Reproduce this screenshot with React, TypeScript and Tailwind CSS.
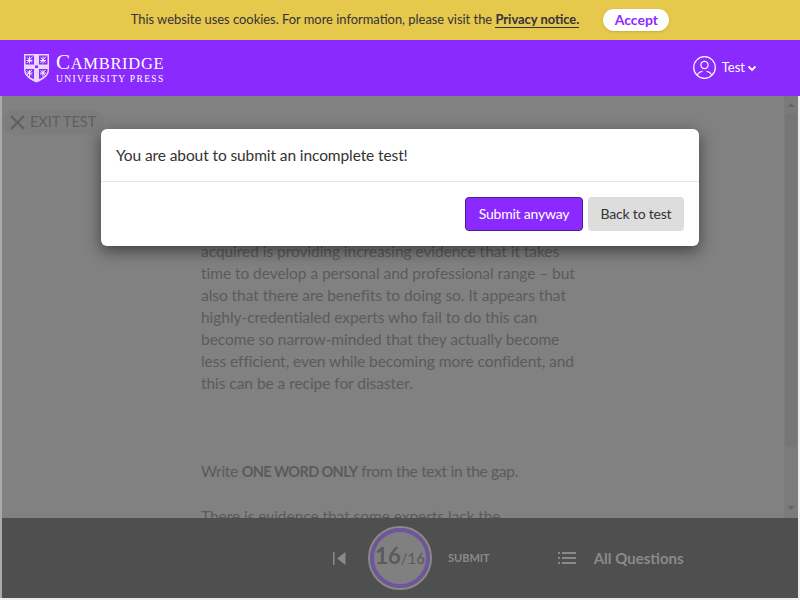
const passage = [
  'acquired is providing increasing evidence that it takes',
  'time to develop a personal and professional range – but',
  'also that there are benefits to doing so. It appears that',
  'highly-credentialed experts who fail to do this can',
  'become so narrow-minded that they actually become',
  'less efficient, even while becoming more confident, and',
  'this can be a recipe for disaster.',
];

function Crest() {
  return (
    <svg width="25" height="30" viewBox="0 0 25 30" className="shrink-0">
      <path d="M0 1h25v16c0 6-6 10-12.500 12.500C6 27 0 23 0 17z" fill="#e9d7ff" />
      <g fill="#8b2aff">
        <rect x="1.500" y="2.500" width="8.500" height="9" />
        <rect x="15" y="2.500" width="8.500" height="9" />
        <path d="M1.500 16h8.500v10C6 24.500 1.500 22 1.500 17z" />
        <path d="M15 16h8.500v1c0 5-4.500 7.500-8.500 9z" />
        <rect x="11" y="12.500" width="3" height="2.500" />
      </g>
      <g stroke="#fff" strokeWidth="0.900" fill="none">
        <path d="M3 10l5.500-6.500M3 4.500l5 5M2.500 7.500h6M5.500 3.500v7" />
        <path d="M16.500 10l5.500-6.500M16.500 4.500l5 5M16 7.500h6M19 3.500v7" />
        <path d="M3 22l5-5M3 17.500l5 5M2.500 20h6M5.500 17v7" />
        <path d="M16.500 22l5-5M16.500 17.500l5 5M16 20h6M19 17v7" />
      </g>
    </svg>
  );
}

function UserIcon() {
  return (
    <svg width="23" height="23" viewBox="0 0 23 23" fill="none" stroke="#fff" strokeWidth="1.200">
      <circle cx="11.500" cy="11.500" r="10.800" />
      <circle cx="11.500" cy="9" r="3.600" />
      <path d="M4.500 19c.5-2.500 3-3.200 5-3.800M18.500 19c-.5-2.500-3-3.200-5-3.800" />
    </svg>
  );
}

export default function App() {
  return (
    <div className="relative flex h-screen flex-col overflow-hidden bg-[#eeeeee] font-['Lato',sans-serif]">
      <div className="flex h-10 shrink-0 items-center justify-center gap-6 bg-[#e5c84c] text-[12.900px] text-[#33333b]">
        <p>
          This website uses cookies. For more information, please visit the{' '}
          <a className="border-b border-[#33333b] font-bold">Privacy notice.</a>
        </p>
        <button className="h-[22px] w-[66px] rounded-full bg-white pb-px text-[14px] font-bold text-[#8b2aff] shadow-sm">
          Accept
        </button>
      </div>

      <header className="flex h-14 shrink-0 items-center justify-between bg-[#8b2aff] pl-6 pr-10 text-white">
        <div className="flex items-center gap-[7px]">
          <Crest />
          <div className="font-['Liberation_Serif',serif] leading-none">
            <div className="text-[16.500px] tracking-[0.7px]">
              <span className="text-[21px]">C</span>AMBRIDGE
            </div>
            <div className="mt-[2px] text-[9.500px] tracking-[1.350px]">UNIVERSITY PRESS</div>
          </div>
        </div>
        <div className="flex items-center pb-px">
          <UserIcon />
          <span className="ml-[6px] text-[13px]">Test</span>
          <svg width="16" height="16" viewBox="0 0 16 16" fill="none" stroke="#fff" strokeWidth="1.800" className="-ml-px">
            <path d="M4.500 6.500L8 10l3.500-3.500" />
          </svg>
        </div>
      </header>

      <div className="mx-[2px] flex min-h-0 flex-1 bg-[#818181] text-[15.500px] leading-[22px] tracking-[-0.05px] text-[#5b5b5b] shadow-[-2px_0_0_#aaaaaa]">
        <main className="min-w-0 flex-1 overflow-hidden">
          <div className="ml-px mt-[14px] flex h-[25px] w-[101px] items-center gap-[5px] whitespace-nowrap rounded-full bg-[#7d7d7d] pb-px pl-[7px] text-[14.500px] text-[#5f5f5f]">
            <svg width="15" height="15" viewBox="0 0 15 15" stroke="#5f5f5f" strokeWidth="2" className="shrink-0">
              <path d="M1 1l13 13M14 1L1 14" />
            </svg>
            <span>EXIT TEST</span>
          </div>
          <div className="ml-[199px] mt-[105px] whitespace-nowrap">
            {passage.map((line) => (
              <p key={line}>{line}</p>
            ))}
            <p className="mt-[66px] tracking-[-0.3px]">
              Write <b className="text-[14.500px] tracking-[-0.6px]">ONE WORD ONLY</b> from the text in the gap.
            </p>
            <p className="mt-[22px]">There is evidence that some experts lack the</p>
          </div>
        </main>
        <div className="flex w-[14px] shrink-0 flex-col items-center bg-[#7b7b7b]">
          <div className="mt-[7px] h-0 w-0 border-x-[4px] border-b-[4px] border-x-transparent border-b-[#666666]" />
          <div className="mt-[6px] h-[334px] w-[12px] rounded-sm bg-[#767676]" />
          <div className="mt-[59px] h-0 w-0 border-x-[4px] border-t-[4px] border-x-transparent border-t-[#666666]" />
        </div>
      </div>

      <footer className="mx-[2px] mb-[2px] flex h-20 shrink-0 items-center bg-[#4f4f4f] pl-[331px] text-[#8a8a8a] shadow-[-2px_0_0_#aaaaaa]">
        <svg width="13" height="13" viewBox="0 0 13 13" fill="#8a8a8a" className="mr-[24px]">
          <rect x="0" y="0" width="1.500" height="13" />
          <path d="M12.500 0v13L4 6.500z" />
        </svg>
        <div className="flex h-[60px] w-[60px] items-baseline justify-center rounded-full border-[4px] border-[#6f559b] bg-[#808080] pt-[10px] leading-[28px] text-[#5a5a5a] outline-2 outline-[#8a8a8a]">
          <span className="text-[22px] font-bold">16</span>
          <span className="text-[15px]">/16</span>
        </div>
        <span className="ml-[18px] text-[11px] font-bold">SUBMIT</span>
        <svg width="18" height="14" viewBox="0 0 18 14" fill="#8a8a8a" className="ml-[68px]">
          <rect x="0" y="1" width="2" height="2" />
          <rect x="4" y="1" width="14" height="2" />
          <rect x="0" y="6" width="2" height="2" />
          <rect x="4" y="6" width="14" height="2" />
          <rect x="0" y="11" width="2" height="2" />
          <rect x="4" y="11" width="14" height="2" />
        </svg>
        <span className="ml-[18px] text-[15px] font-bold">All Questions</span>
      </footer>

      <div className="absolute left-[101px] top-[129px] w-[598px] rounded-md bg-white text-[#333333] shadow-[0_5px_15px_rgba(0,0,0,0.5)]">
        <div className="flex h-[53px] items-center border-b border-[#e5e5e5] px-[15px] pt-px text-[15.500px] tracking-[-0.1px]">
          You are about to submit an incomplete test!
        </div>
        <div className="flex justify-end gap-[5px] p-[15px] text-[14px] tracking-[-0.2px]">
          <button className="h-[34px] w-[118px] rounded-[4px] border border-[#4b1a91] bg-[#8b2aff] pb-[2px] text-white">
            Submit anyway
          </button>
          <button className="h-[34px] w-[96px] rounded-[4px] bg-[#dddddd] pb-[2px]">Back to test</button>
        </div>
      </div>
    </div>
  );
}
